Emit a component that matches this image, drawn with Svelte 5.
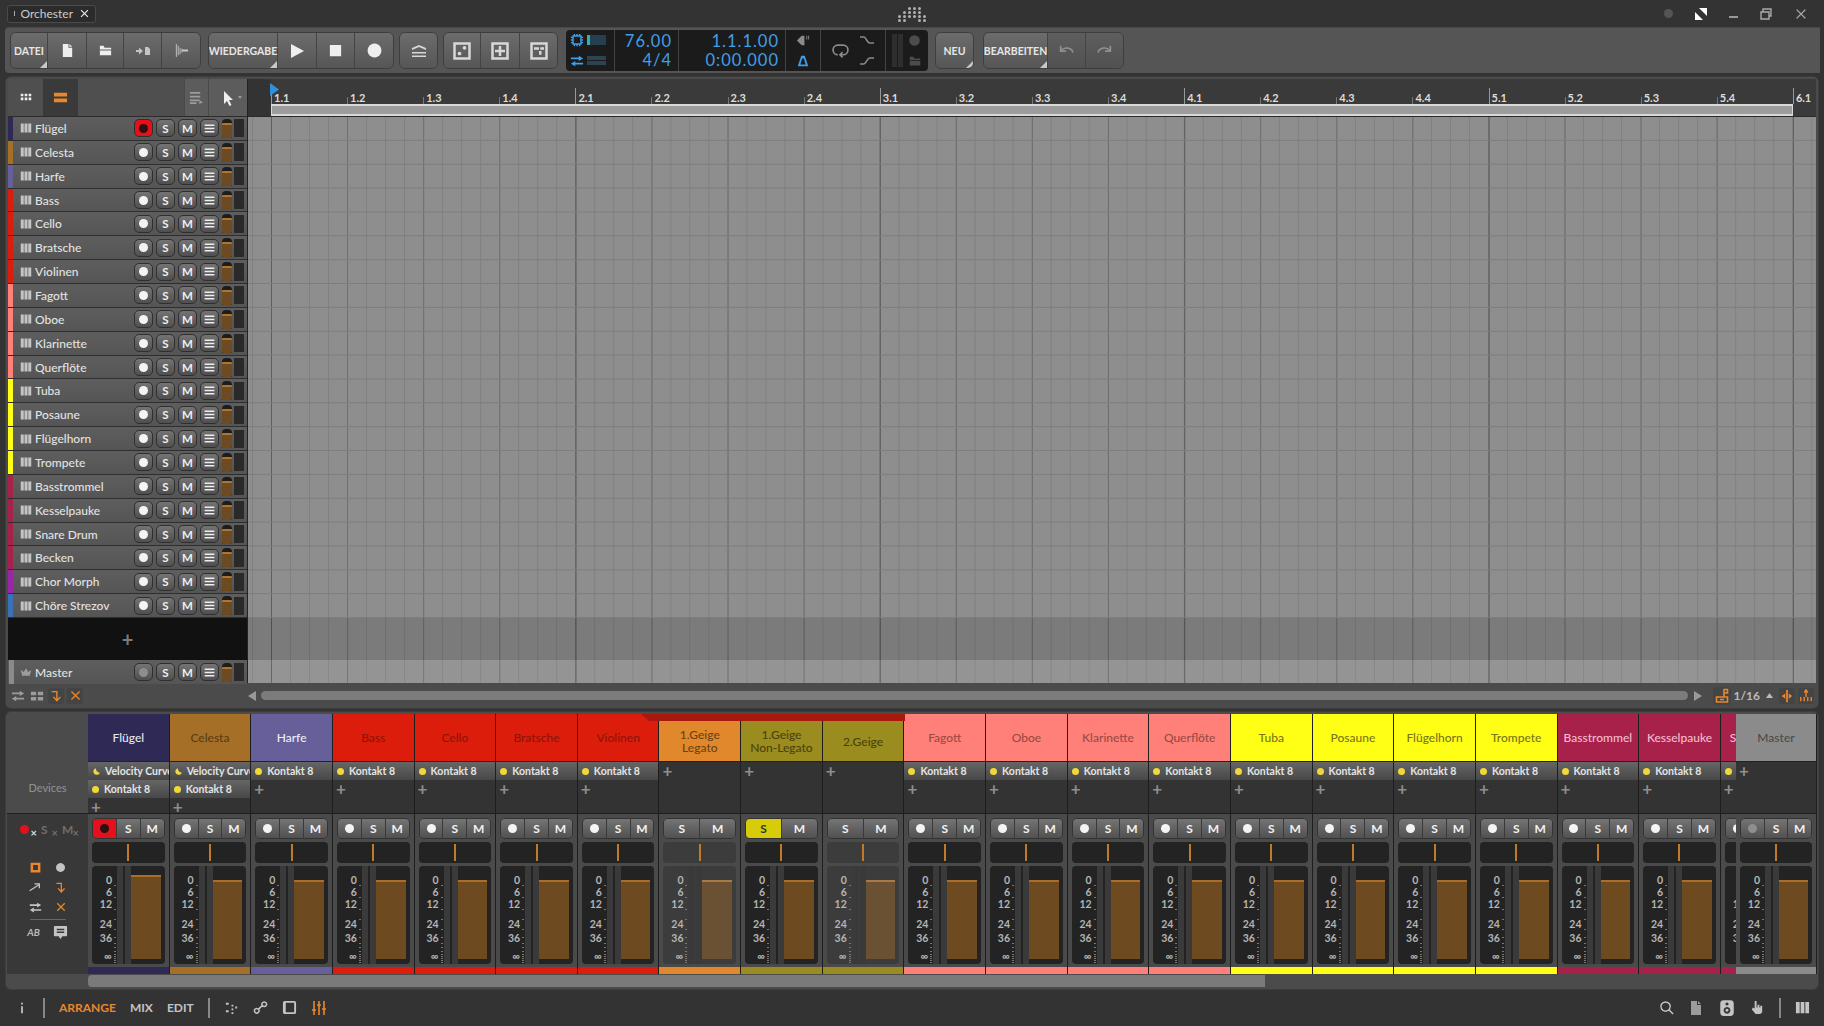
<script lang="ts">
	const RED = '#dd1d0b', PINK = '#ff8078', YEL = '#ffff15', CRIM = '#a8214b';

	const tracks = [
		['Flügel', '#2e2a55'], ['Celesta', '#a56f27'], ['Harfe', '#665f9a'], ['Bass', RED], ['Cello', RED],
		['Bratsche', RED], ['Violinen', RED], ['Fagott', PINK], ['Oboe', PINK], ['Klarinette', PINK],
		['Querflöte', PINK], ['Tuba', YEL], ['Posaune', YEL], ['Flügelhorn', YEL], ['Trompete', YEL],
		['Basstrommel', CRIM], ['Kesselpauke', CRIM], ['Snare Drum', CRIM], ['Becken', CRIM],
		['Chor Morph', '#9b26a5'], ['Chöre Strezov', '#3a72b8']
	];

	type Strip = { name: string; lines?: string[]; color: string; ink: string; dev: number; curve?: boolean; rec?: boolean; group?: boolean; dim?: boolean; solo?: boolean; top?: boolean };
	const rd = '#8d1409', pk = '#9a4a44', yl = '#77771a', cr = '#f4bccd';
	const strips: Strip[] = [
		{ name: 'Flügel', color: '#2e2a55', ink: '#e6e6f0', dev: 2, curve: true, rec: true, top: true },
		{ name: 'Celesta', color: '#a56f27', ink: '#5c3d14', dev: 2, curve: true },
		{ name: 'Harfe', color: '#665f9a', ink: '#eeeef6', dev: 1 },
		{ name: 'Bass', color: RED, ink: rd, dev: 1 },
		{ name: 'Cello', color: RED, ink: rd, dev: 1 },
		{ name: 'Bratsche', color: RED, ink: rd, dev: 1 },
		{ name: 'Violinen', color: RED, ink: rd, dev: 1 },
		{ name: '1.Geige', lines: ['1.Geige', 'Legato'], color: '#e0882b', ink: '#6e4314', dev: 0, group: true, dim: true },
		{ name: '1.Geige', lines: ['1.Geige', 'Non-Legato'], color: '#9a8c1e', ink: '#4a430d', dev: 0, group: true, solo: true },
		{ name: '2.Geige', color: '#9a8c1e', ink: '#4a430d', dev: 0, group: true, dim: true },
		{ name: 'Fagott', color: PINK, ink: pk, dev: 1 },
		{ name: 'Oboe', color: PINK, ink: pk, dev: 1 },
		{ name: 'Klarinette', color: PINK, ink: pk, dev: 1 },
		{ name: 'Querflöte', color: PINK, ink: pk, dev: 1 },
		{ name: 'Tuba', color: YEL, ink: yl, dev: 1 },
		{ name: 'Posaune', color: YEL, ink: yl, dev: 1 },
		{ name: 'Flügelhorn', color: YEL, ink: yl, dev: 1 },
		{ name: 'Trompete', color: YEL, ink: yl, dev: 1 },
		{ name: 'Basstrommel', color: CRIM, ink: cr, dev: 1 },
		{ name: 'Kesselpauke', color: CRIM, ink: cr, dev: 1 },
		{ name: 'Snare Drum', color: CRIM, ink: cr, dev: 1 }
	];
	const master: Strip = { name: 'Master', color: '#8b8b8b', ink: '#4c4c4c', dev: 0 };

	const beats: { label: string; bar: boolean }[] = [];
	for (let b = 1; b <= 5; b++) for (let q = 1; q <= 4; q++) beats.push({ label: `${b}.${q}`, bar: q === 1 });
	beats.push({ label: '6.1', bar: true });

	// dB scale, top offsets inside the fader box
	const scale = [['0', 14], ['6', 26], ['12', 38], ['24', 58], ['36', 72], ['∞', 90]];
	const ticks = [14, 26, 38, 48, 58, 66, 72, 76, 80, 83, 85, 87, 89, 91];

	const paths: Record<string, string> = {
		file: 'M3 1h6v4h4v10H3zM10 1l3 3h-3z',
		folder: 'M2 3h4l1 2h7v2H2zM2 8h12v5H2z',
		load: 'M1 7h3V4.5L8 8l-4 3.5V9H1zM10 4h3l2 2v6h-5z',
		wave: 'M2 1h1v14H2zM4 3h1v10H4zM6 5h1v7H6zM8 6h1v4H8zM9 7h6v2H9z',
		play: 'M2 1l13 7-13 7z',
		stop: 'M2 2h12v12H2z',
		dot: 'M8 1.5a6.5 6.5 0 1 0 .01 0z',
		layers: 'M8 2l7 3v2L8 4 1 7V5zM1 9h14v1.5H1zM1 12.5h14V14H1z',
		grid: 'M2 3h3v3H2zM6.5 3h3v3h-3zM11 3h3v3h-3zM2 7.5h3v3H2zM6.5 7.5h3v3h-3zM11 7.5h3v3h-3z',
		rows: 'M1 3h14v4H1zM1 9h14v4H1z',
		menu: 'M2 3h12v2H2zM2 7h12v2H2zM2 11h12v2H2z',
		lanes: 'M1 2h11v2H1zM1 6h11v2H1zM1 10h11v2H1zM1 13h7v2H1zM11 11l4 2-4 2z',
		piano: 'M1 2h4v12H1zM6 2h4v12H6zM11 2h4v12h-4z',
		crown: 'M1 5l4 3 3-5 3 5 4-3-2 8H3z',
		cursor: 'M4 1l9 9H9l2.5 5-2 1L7 11l-3 3z',
		swap: 'M1 4h9V2l5 3-5 3V6H1zM15 10H6V8l-5 3 5 3v-2h9z',
		split: 'M1 3h6v4H1zM9 3h6v4H9zM1 9h6v4H1zM9 9h6v4H9z',
		chat: 'M2 1h12a1 1 0 0 1 1 1v9a1 1 0 0 1-1 1H10l-2 3-2-3H2a1 1 0 0 1-1-1V2a1 1 0 0 1 1-1zM4 4v1.5h8V4zM4 7v1.5h8V7z',
		hand: 'M5 1h2v7h1V5h2v3h1V6h2v7l-2 2H6L2 10l1-2 2 1z',
		speaker: 'M5 1h6a3 3 0 0 1 3 3v8a3 3 0 0 1-3 3H5a3 3 0 0 1-3-3V4a3 3 0 0 1 3-3zM8 3a1.4 1.4 0 1 0 .01 0zM8 7a3 3 0 1 0 .01 0zM8 8.6a1.4 1.4 0 1 1-.01 0z',
		panel: 'M3 1h10a2 2 0 0 1 2 2v10a2 2 0 0 1-2 2H3a2 2 0 0 1-2-2V3a2 2 0 0 1 2-2zM4 3v10h9V3z',
		info: 'M7 2h2v2H7zM7 6h2v8H7z',
		scatter: 'M2 3h3v2H2zM8 5h2v2H8zM12 7h2v2h-2zM8 9h2v2H8zM2 11h3v2H2zM8 13h2v2H8z',
		moon: 'M7 2a6 6 0 1 0 7 8A7 7 0 0 1 7 2z',
		pin: 'M7 1h2v14H7zM2 8l4-3v6zM14 8l-4-3v6z',
		metro: 'M6 2h4l4 12H2zM7 5l-2 7h6L9 5z',
		mark: 'M1 8l5-5h3v10H6zM11 3h1v4h-1zM13 3h1v4h-1z',
		curveA: '',
		square: 'M2 2h12v12H2zM5 5v6h6V5z',
		plusbox: 'M1 1h14v14H1zM3 3v10h10V3zM7 4h2v3h3v2H9v3H7V9H4V7h3z',
		patch: 'M1 1h14v14H1zM3 3v10h10V3zM4 5h4v2H4zM9 5h3v2H9zM8 8h2v3H8z',
		nodes: 'M1 1h14v14H1zM3 3v10h10V3zM10 4a1.5 1.5 0 1 0 .01 0zM6 8.5a1.5 1.5 0 1 0 .01 0z'
	};
	const strokes: Record<string, string> = {
		undo: 'M3 8a6 5 0 0 1 11 2M2.5 3.5V8.5H7.5',
		redo: 'M13 8a6 5 0 0 0-11 2M13.5 3.5V8.5H8.5',
		loop: 'M5.5 3h5a4 4 0 0 1 0 9H8M10 9.5L7.5 12 10 14.5M5.5 12a4.5 4.5 0 0 1 0-9',
		cross: 'M3 3l10 10M13 3L3 13',
		down: 'M3 3h6v9M5 9l4 4.5L13 9',
		upright: 'M2 12l11-7M8 3.5h6V9',
		search: 'M7 2a5 5 0 1 0 .01 0zM10.5 10.5l4.5 4.5',
		link: 'M4 9a2.5 2.5 0 1 0 .01 0zM12 2a2.5 2.5 0 1 0 .01 0zM5.6 10l4.8-4.5',
		faders: 'M3 1v14M8 1v14M13 1v14M1 10h4M6 5h4M11 9h4',
		net: 'M10 1.5h3.5v3.5H10zM2.5 9h11v5h-11zM10 5v4M6 11.5h4',
		tilt: 'M8 1v8M2 14V9M6 14V9M10 14V9M14 14V9M6 4l2-3 2 3',
		cpu: 'M3.5 3.5h9v9h-9zM5 1v2M8 1v2M11 1v2M5 13v2M8 13v2M11 13v2M1 5h2M1 8h2M1 11h2M13 5h2M13 8h2M13 11h2',
		wave1: 'M1 5h4c2 0 3 6 6 6h4',
		wave2: 'M1 11h4c2 0 3-6 6-6h4'
	};
</script>

{#snippet ic(name: string, size = 14, cls = '')}
	<svg class="ic {cls}" width={size} height={size} viewBox="0 0 16 16" aria-hidden="true">
		{#if strokes[name]}
			<path d={strokes[name]} fill="none" stroke="currentColor" stroke-width="1.6" />
		{:else}
			<path d={paths[name]} fill="currentColor" fill-rule="evenodd" />
		{/if}
	</svg>
{/snippet}

{#snippet stripColumn(s: Strip, w: string)}
	<div class="strip {w}">
		<div class="head" class:grouped={s.group} style="background:{s.color};color:{s.ink}">
			{#if s.lines}
				{#each s.lines as l}<span>{l}</span>{/each}
			{:else}
				<span>{s.name}</span>
			{/if}
		</div>
		<div class="devs">
			{#if s.curve}
				<div class="dev">{@render ic('moon', 9, 'yel')}<span>Velocity Curve</span></div>
			{/if}
			{#if s.dev > 0}
				<div class="dev"><i class="ydot"></i><span>Kontakt 8</span></div>
			{/if}
			<div class="add">+</div>
		</div>
		<div class="ctl">
			<div class="seg">
				{#if !s.group}
					<button class="sg" class:on={s.rec}><i class="rdot" class:dark={s.rec} class:grey={s === master}></i></button>
				{/if}
				<button class="sg" class:soloed={s.solo}>S</button>
				<button class="sg">M</button>
			</div>
			<div class="pan" class:muted={s.dim}><i></i></div>
			<div class="fader" class:muted={s.dim}>
				<div class="scale">
					{#each scale as [t, y]}<span style="top:{y}px">{t}</span>{/each}
					{#each ticks as y}<b style="top:{y + 5}px"></b>{/each}
				</div>
				<div class="meter"><i></i><i></i></div>
				<div class="fillcol">
					<div class="fill" style="height:{s.top ? 84 : 79}px"></div>
				</div>
			</div>
		</div>
		<div class="foot" style="background:{s.color}"></div>
	</div>
{/snippet}

<div class="app">
	<header class="title">
		<div class="tab"><i class="tabdot"></i><span>Orchester</span>{@render ic('cross', 11)}</div>
		<div class="logo" aria-hidden="true">
			{#each [[0,0,1,1,1,0],[0,1,1,1,1,0],[1,1,1,1,1,1],[1,1,0,0,1,1]] as row}
				<div class="logorow">{#each row as c}<i class:off={!c}></i>{/each}</div>
			{/each}
		</div>
		<div class="win">
			<i class="windot"></i>
			<svg width="14" height="14" viewBox="0 0 14 14" aria-hidden="true"><path d="M5 1h8v8zM1 5l8 8H1z" fill="#fff" /></svg>
			<span class="wmin"></span>
			<svg width="14" height="14" viewBox="0 0 14 14" aria-hidden="true"><path d="M2 5h8v7H2zM4 5V2h8v7h-2" fill="none" stroke="#aaa" stroke-width="1.4" /></svg>
			{@render ic('cross', 14, 'wclose')}
		</div>
	</header>

	<section class="toolbar">
		<div class="grp g1">
			<button class="tb tx corner" style="width:37px">DATEI</button>
			<button class="tb" style="width:39px">{@render ic('file', 15)}</button>
			<button class="tb" style="width:37px">{@render ic('folder', 15)}</button>
			<button class="tb" style="width:38px">{@render ic('load', 16, 'soft')}</button>
			<button class="tb" style="width:38px">{@render ic('wave', 15, 'soft')}</button>
		</div>
		<div class="grp g2">
			<button class="tb tx corner" style="width:69px">WIEDERGABE</button>
			<button class="tb" style="width:39px">{@render ic('play', 16)}</button>
			<button class="tb" style="width:38px">{@render ic('stop', 15)}</button>
			<button class="tb" style="width:38px">{@render ic('dot', 17)}</button>
		</div>
		<div class="grp g3"><button class="tb" style="width:37px">{@render ic('layers', 16, 'soft')}</button></div>
		<div class="grp g3">
			<button class="tb" style="width:37px">{@render ic('nodes', 20)}</button>
			<button class="tb" style="width:39px">{@render ic('plusbox', 20)}</button>
			<button class="tb" style="width:37px">{@render ic('patch', 20)}</button>
		</div>
		<div class="display">
			<div class="dsec perf">
				<div class="drow">{@render ic('cpu', 14)}<span class="dbar"><i></i></span></div>
				<div class="drow">{@render ic('swap', 14)}<span class="dbar two"></span></div>
			</div>
			<div class="dsec num tempo"><span>76.00</span><span>4/4</span></div>
			<div class="dsec num pos"><span>1.1.1.00</span><span>0:00.000</span></div>
			<div class="dsec ico">{@render ic('mark', 15, 'grey')}{@render ic('metro', 14)}</div>
			<div class="dsec lp">
				{@render ic('loop', 17, 'grey')}
				<div class="lpw">{@render ic('wave1', 16, 'grey')}{@render ic('wave2', 16, 'grey')}</div>
			</div>
			<div class="dsec arm">
				<span class="armbars"><i></i><i></i></span>
				<div class="lpw">{@render ic('dot', 13, 'dgrey')}{@render ic('folder', 14, 'dgrey')}</div>
			</div>
		</div>
		<div class="grp g4"><button class="tb tx corner" style="width:37px">NEU</button></div>
		<div class="grp g5">
			<button class="tb tx corner" style="width:64px">BEARBEITEN</button>
			<button class="tb dis" style="width:38px">{@render ic('undo', 17)}</button>
			<button class="tb dis" style="width:37px">{@render ic('redo', 17)}</button>
		</div>
	</section>

	<section class="arrange">
		<div class="arr-main">
			<div class="tracks">
				<div class="lhead">
					<button class="lh" style="width:35px">{@render ic('grid', 14)}</button>
					<button class="lh active" style="width:35px">{@render ic('rows', 15, 'or')}</button>
					<span class="lspace"></span>
					<button class="lh shade" style="width:24px">{@render ic('lanes', 15, 'mid')}</button>
					<button class="lh shade cur" style="width:39px">{@render ic('cursor', 16)}<em></em></button>
				</div>
				{#each tracks as [name, color], i}
					<div class="track">
						<i class="stripe" style="background:{color}"></i>
						{@render ic('piano', 12, 'soft')}
						<span class="tname">{name}</span>
						<button class="tbtn" class:on={i === 0}><i class="rdot" class:dark={i === 0}></i></button>
						<button class="tbtn">S</button>
						<button class="tbtn">M</button>
						<button class="tbtn">{@render ic('menu', 13)}</button>
						<span class="vol"><i></i></span>
						<span class="lvl"></span>
					</div>
				{/each}
				<div class="addzone">+</div>
				<div class="track mast">
					<i class="stripe" style="background:#8b8b8b"></i>
					{@render ic('crown', 12, 'mid')}
					<span class="tname">Master</span>
					<button class="tbtn"><i class="rdot grey"></i></button>
					<button class="tbtn">S</button>
					<button class="tbtn">M</button>
					<button class="tbtn">{@render ic('menu', 13)}</button>
					<span class="vol"><i></i></span>
					<span class="lvl"></span>
				</div>
			</div>
			<div class="timeline">
				<div class="ruler">
					<div class="pre"><svg class="playhead" width="9" height="13" viewBox="0 0 9 13" aria-hidden="true"><path d="M0 0l9 6.5L0 13z" fill="#2f8fd8" /></svg></div>
					{#each beats as b}
						<div class="beat" class:bar={b.bar}><span>{b.label}</span></div>
					{/each}
					<div class="loopbar"></div>
				</div>
				<div class="gridarea">
					<div class="lanes"></div>
					<div class="empty"></div>
					<div class="mlane"></div>
				</div>
			</div>
		</div>
		<div class="arr-foot">
			<div class="ftools">
				<span class="fb">{@render ic('swap', 14, 'mid')}</span>
				<span class="fb">{@render ic('split', 14, 'mid')}</span>
				<span class="fb box">{@render ic('down', 14, 'or')}</span>
				<span class="fb box">{@render ic('cross', 13, 'or')}</span>
			</div>
			<svg class="arrow" width="8" height="10" viewBox="0 0 8 10" aria-hidden="true"><path d="M8 0v10L0 5z" fill="#999" /></svg>
			<div class="thumb"></div>
			<svg class="arrow" width="8" height="10" viewBox="0 0 8 10" aria-hidden="true"><path d="M0 0v10l8-5z" fill="#999" /></svg>
			<span class="fb box wide">{@render ic('net', 16, 'or')}</span>
			<span class="quant">1/16</span>
			<svg width="7" height="5" viewBox="0 0 7 5" aria-hidden="true"><path d="M3.5 0L7 5H0z" fill="#bbb" /></svg>
			<span class="fb box">{@render ic('pin', 14, 'or')}</span>
			<span class="fb box">{@render ic('tilt', 14, 'or')}</span>
		</div>
	</section>

	<section class="mixer">
		<div class="mix-body">
			<div class="mleft">
				<div class="mlabel">Devices</div>
				<div class="mtools">
					<div class="mrow top">
						<span class="tog"><i class="reddot"></i><small>×</small></span>
						<span class="tog dimtx">S<small>×</small></span>
						<span class="tog dimtx">M<small>×</small></span>
					</div>
					<div class="mrow first">{@render ic('square', 13, 'or')}{@render ic('dot', 11, 'soft')}</div>
					<div class="mrow">{@render ic('upright', 13, 'soft')}{@render ic('down', 13, 'or')}</div>
					<div class="mrow">{@render ic('swap', 13, 'soft')}{@render ic('cross', 12, 'or')}</div>
					<div class="mrule"></div>
					<div class="mrow"><em class="ab">AB</em>{@render ic('chat', 15, 'soft')}</div>
				</div>
			</div>
			<div class="strips">
				{#each strips as s}
					{@render stripColumn(s, 'w')}
				{/each}
				<div class="groupbar"></div>
			</div>
			{@render stripColumn(master, 'master')}
		</div>
		<div class="mscroll"><div class="mthumb"></div></div>
	</section>

	<footer class="status">
		<div class="sleft">
			{@render ic('info', 14, 'soft')}
			<i class="ssep"></i>
			<span class="nav act">ARRANGE</span>
			<span class="nav">MIX</span>
			<span class="nav">EDIT</span>
			<i class="ssep"></i>
			{@render ic('scatter', 15, 'soft')}
			{@render ic('link', 15, 'soft')}
			{@render ic('panel', 15, 'soft')}
			{@render ic('faders', 16, 'or')}
		</div>
		<div class="sright">
			{@render ic('search', 15, 'soft')}
			{@render ic('file', 16, 'mid')}
			{@render ic('speaker', 18, 'soft')}
			{@render ic('hand', 15, 'soft')}
			<i class="ssep"></i>
			{@render ic('piano', 15, 'soft')}
		</div>
	</footer>
</div>

<style>
	:global(body) {
		margin: 0;
		background: #333;
	}
	.app {
		width: 1824px;
		height: 1026px;
		overflow: hidden;
		display: flex;
		flex-direction: column;
		background: #333;
		color: #ddd;
		font-family: Lato, 'Open Sans', sans-serif;
	}
	button {
		font: inherit;
		color: inherit;
		padding: 0;
		margin: 0;
		border: 0;
	}
	.ic { display: block; flex: none; color: #eee; }
	.ic.soft { color: #c4c4c4; }
	.ic.mid { color: #9c9c9c; }
	.ic.or { color: #e8872e; }
	.ic.yel { color: #f0d83a; }
	.ic.grey { color: #8a8a8a; }
	.ic.dgrey { color: #4c4c4c; }

	/* title */
	.title {
		height: 27px;
		flex: none;
		display: flex;
		align-items: center;
		position: relative;
		padding: 0 16px 0 7px;
		justify-content: space-between;
	}
	.tab {
		width: 89px;
		height: 18px;
		box-sizing: border-box;
		border: 1px solid #4a4a4a;
		border-radius: 3px;
		background: #2b2b2b;
		display: flex;
		align-items: center;
		gap: 6px;
		padding: 0 5px;
		font-size: 12px;
		color: #ccc;
	}
	.tabdot { width: 5px; height: 5px; background: #aaa; margin-left: 1px; }
	.logo {
		position: absolute;
		left: 898px;
		top: 7px;
		display: flex;
		flex-direction: column;
		gap: 1px;
	}
	.logorow { display: flex; gap: 1px; }
	.logorow i { width: 3px; height: 3px; border-radius: 50%; background: #b0b0b0; margin-right: 1px; }
	.logorow i.off { background: transparent; }
	.win { display: flex; align-items: center; gap: 21px; color: #aaa; }
	.windot { width: 9px; height: 9px; border-radius: 50%; background: #555; }
	.wmin { width: 9px; height: 2px; background: #999; margin-top: 6px; }
	.win :global(.wclose) { color: #aaa; }

	/* toolbar */
	.toolbar {
		height: 45px;
		flex: none;
		margin: 1px 0 4px 5px;
		padding: 4px 0 0 5px;
		box-sizing: border-box;
		background: #555;
		border-radius: 4px 0 0 4px;
		display: flex;
		align-items: flex-start;
		box-shadow: 0 -1px 0 #484848;
	}
	.toolbar { width: 1815px; }
	.grp {
		display: flex;
		height: 37px;
		box-sizing: border-box;
		border: 1px solid #3e3e3e;
		border-radius: 6px;
		overflow: hidden;
		flex: none;
	}
	.g1 { margin-right: 7px; }
	.g2 { margin-right: 5px; }
	.g3 { margin-right: 5px; }
	.g4 { margin-right: 9px; }
	.tb {
		height: 100%;
		display: flex;
		align-items: center;
		justify-content: center;
		background: linear-gradient(#6c6c6c, #565656);
		border-right: 1px solid #444;
		position: relative;
		box-sizing: border-box;
	}
	.tb:last-child { border-right: 0; }
	.tb.tx { font-size: 10.5px; font-weight: 700; color: #e6e6e6; white-space: nowrap; }
	.tb.corner::after {
		content: '';
		position: absolute;
		right: 0;
		bottom: 0;
		width: 0;
		height: 0;
		border-left: 7px solid transparent;
		border-bottom: 7px solid #c8c8c8;
	}
	.tb.dis { background: linear-gradient(#5e5e5e, #515151); }
	.tb.dis :global(.ic) { color: #8f8f8f; }
	.g3 .tb :global(.ic) { color: #d8d8d8; }

	.display {
		flex: none;
		width: 362px;
		height: 41px;
		margin: -2px 7px 0 3px;
		background: #1b1b1b;
		border-radius: 4px;
		display: flex;
		color: #3f9fe8;
	}
	.display :global(.ic:not(.grey):not(.dgrey)) { color: #3f9fe8; }
	.dsec {
		box-sizing: border-box;
		border-right: 1px solid #444;
		height: 100%;
		display: flex;
		flex-direction: column;
		justify-content: space-around;
		flex: none;
	}
	.dsec:last-child { border-right: 0; }
	.perf { width: 49px; padding-left: 4px; }
	.drow { display: flex; align-items: center; gap: 3px; }
	.dbar { width: 19px; height: 10px; background: #24404f; display: block; }
	.dbar i { display: block; width: 3px; height: 100%; background: #2fb3a8; }
	.dbar.two { height: 9px; background: linear-gradient(#2c4452 40%, #1b1b1b 40%, #1b1b1b 60%, #2c4452 60%); }
	.num { font-size: 16.5px; letter-spacing: 1px; text-align: right; align-items: flex-end; padding-right: 6px; line-height: 19px; justify-content: center; }
	.tempo { width: 64px; }
	.pos { width: 107px; }
	.ico { width: 35px; align-items: center; }
	.lp { width: 65px; flex-direction: row; align-items: center; justify-content: center; gap: 10px; }
	.lpw { display: flex; flex-direction: column; justify-content: space-around; height: 100%; }
	.arm { width: 42px; flex-direction: row; align-items: center; justify-content: center; gap: 5px; }
	.armbars { display: flex; gap: 1px; height: 33px; }
	.armbars i { width: 5px; background: #2e2e2e; }

	/* arrange */
	.arrange {
		height: 631px;
		flex: none;
		margin: 0 6px 4px 6px;
		box-sizing: border-box;
		padding: 2px 2px 0 2px;
		background: #4b4b4b;
		border-radius: 5px;
		box-shadow: 0 0 0 1px #3d3d3d;
		display: flex;
		flex-direction: column;
	}
	.arr-main { height: 604px; display: flex; flex: none; background: #222; }
	.tracks { width: 239px; flex: none; background: #111; display: flex; flex-direction: column; margin-right: 1px; }
	.lhead {
		height: 37px;
		flex: none;
		display: flex;
		background: #4f4f4f;
		border-bottom: 1px solid #2c2c2c;
		box-sizing: content-box;
	}
	.lh { display: flex; align-items: center; justify-content: center; background: #4f4f4f; position: relative; }
	.lh.active { background: #3a3a3a; }
	.lh.shade { background: #5c5c5c; border-left: 1px solid #4a4a4a; box-sizing: border-box; }
	.lh.cur em {
		position: absolute; right: 5px; top: 17px;
		border-left: 2.5px solid transparent; border-right: 2.5px solid transparent; border-top: 3px solid #999;
	}
	.lspace { flex: 1; }
	.track {
		height: 23.87px;
		flex: none;
		box-sizing: border-box;
		display: flex;
		align-items: center;
		background: linear-gradient(#5e5e5e, #555);
		border-bottom: 1px solid #2e2e2e;
		padding-right: 3px;
	}
	.stripe { width: 5px; height: 100%; flex: none; margin-right: 7px; }
	.tname { flex: 1; margin-left: 3px; font-size: 12px; font-weight: 500; color: #e2e2e2; white-space: nowrap; }
	.tbtn {
		width: 19px;
		height: 18px;
		box-sizing: border-box;
		margin-right: 3px;
		flex: none;
		display: flex;
		align-items: center;
		justify-content: center;
		border: 1px solid #2f2f2f;
		border-radius: 5px;
		background: linear-gradient(#747474, #4f4f4f);
		font-size: 11.5px;
		font-weight: 700;
		color: #f0f0f0;
	}
	.tbtn.on { background: #e4101c; }
	.rdot { display: block; width: 9px; height: 9px; border-radius: 50%; background: #f4f4f4; }
	.rdot.dark { background: #2a1010; }
	.rdot.grey { background: #8e8e8e; }
	.vol {
		width: 10px;
		height: 19px;
		flex: none;
		background: #1d1d1d;
		border-radius: 4px 4px 1px 1px;
		display: flex;
		align-items: flex-end;
		margin-right: 2px;
		overflow: hidden;
	}
	.vol i { display: block; width: 100%; height: 15px; background: linear-gradient(#b0742e 2px, #6e4a20 2px); border-radius: 1px; }
	.lvl { width: 10px; height: 18px; flex: none; background: #2a2a2a; }
	.addzone { height: 42px; flex: none; background: #111; color: #7a7a7a; display: flex; align-items: center; justify-content: center; font-size: 20px; font-weight: 700; margin-top: 0; }
	.track.mast { border-bottom: 0; height: 24px; }
	.track.mast .stripe { margin-left: 1px; margin-right: 6px; }

	.timeline { flex: 1; min-width: 0; display: flex; flex-direction: column; background: #3a3a3a; }
	.ruler {
		height: 37px;
		flex: none;
		display: flex;
		position: relative;
		background: #3a3a3a;
		border-bottom: 1px solid #2a2a2a;
		overflow: hidden;
	}
	.pre { width: 23px; flex: none; background: #333; position: relative; }
	.playhead { position: absolute; left: 22px; top: 4px; z-index: 2; }
	.beat {
		width: 76.1px;
		flex: none;
		box-sizing: border-box;
		font-size: 11px;
		font-weight: 700;
		color: #dcdcdc;
		padding: 12px 0 0 3px;
		position: relative;
	}
	.beat::before { content: ''; position: absolute; left: 0; top: 18px; height: 7px; width: 1px; background: #777; }
	.beat.bar::before { top: 9px; height: 16px; background: #999; }
	.loopbar {
		position: absolute;
		left: 23px;
		width: 1522px;
		top: 25px;
		height: 12px;
		box-sizing: border-box;
		background: #9c9c9c;
		border: 1px solid #d8d8d8;
		border-width: 2px 1px;
	}
	.gridarea {
		flex: 1;
		display: flex;
		flex-direction: column;
		background-color: #8e8e8e;
		background-image:
			linear-gradient(to right, #5e5e5e 1px, transparent 1px),
			linear-gradient(to right, #6e6e6e 1px, transparent 1px),
			linear-gradient(to right, #808080 1px, transparent 1px);
		background-size: 304.4px 100%, 76.1px 100%, 19.025px 100%;
		background-position: 23px 0, 23px 0, 4px 0;
	}
	.lanes {
		height: 501.3px;
		flex: none;
		background-image: linear-gradient(to bottom, transparent 22.87px, #7d7d7d 22.87px);
		background-size: 100% 23.87px;
	}
	.empty { height: 42px; flex: none; background: rgba(0, 0, 0, 0.13); }
	.mlane { flex: 1; background: rgba(255, 255, 255, 0.06); }

	.arr-foot { flex: 1; display: flex; align-items: center; padding-right: 2px; }
	.ftools { width: 240px; display: flex; align-items: center; gap: 3px; padding-left: 2px; flex: none; box-sizing: border-box; }
	.fb { width: 16px; height: 16px; display: flex; align-items: center; justify-content: center; flex: none; }
	.fb.box { background: #444; border-radius: 3px; }
	.fb.wide { width: 18px; height: 18px; margin: 0 50px 0 5px; }
	.arrow { flex: none; margin: 0 5px 0 0; }
	.thumb { flex: 1; height: 9px; border-radius: 5px; background: #7c7c7c; margin-right: 6px; }
	.quant { font-size: 12px; font-weight: 700; color: #bbb; margin-right: 6px; }
	.arr-foot svg + .fb.box { margin-left: 6px; margin-right: 3px; }

	/* mixer */
	.mixer {
		height: 277px;
		flex: none;
		margin: 0 6px 0 6px;
		box-sizing: border-box;
		padding: 2px 1px 2px 1px;
		background: #4b4b4b;
		border-radius: 5px;
		box-shadow: 0 0 0 1px #3d3d3d;
		display: flex;
		flex-direction: column;
	}
	.mix-body { height: 260px; flex: none; display: flex; }
	.mleft { width: 81px; flex: none; display: flex; flex-direction: column; }
	.mlabel { height: 100px; flex: none; box-sizing: border-box; background: #4b4b4b; border-bottom: 1px solid #222; color: #8f8f8f; font-size: 11px; font-weight: 500; display: flex; align-items: flex-end; justify-content: center; padding-bottom: 19px; }
	.mtools { flex: 1; background: #383838; display: flex; flex-direction: column; align-items: center; }
	.mrow { display: flex; align-items: center; justify-content: center; gap: 13px; height: 20px; }
	.mrow.top { gap: 8px; margin-top: 5px; height: 20px; font-size: 12px; }
	.mrow.first { margin-top: 18px; height: 20px; }
	.mrule { width: 36px; height: 1px; background: #666; margin: 2px 0 2px; }
	.tog { position: relative; display: flex; align-items: center; width: 13px; height: 14px; }
	.tog small { position: absolute; right: -4px; bottom: -2px; font-size: 11px; font-weight: 700; color: #ddd; line-height: 1; }
	.dimtx { color: #6f6f6f; font-weight: 700; }
	.dimtx small { color: #6f6f6f; }
	.reddot { width: 9px; height: 9px; border-radius: 50%; background: #e4101c; display: block; }
	.ab { font-size: 10px; font-weight: 700; color: #bbb; font-style: italic; }

	.strips { flex: 1; min-width: 0; display: flex; overflow: hidden; position: relative; background: #222; }
	.strip { flex: none; box-sizing: border-box; border-right: 1px solid #1e1e1e; display: flex; flex-direction: column; background: #4a4a4a; }
	.strip.w { width: 81.65px; }
	.strip.master { width: 81px; }
	.head {
		height: 47px;
		flex: none;
		display: flex;
		flex-direction: column;
		align-items: center;
		justify-content: center;
		font-size: 12px;
		font-weight: 500;
		line-height: 13px;
		white-space: nowrap;
	}
	.head.grouped { padding-top: 7px; box-sizing: border-box; }
	.groupbar {
		position: absolute;
		left: 553px;
		top: 0;
		width: 264px;
		height: 7px;
		background: #a8180c;
		clip-path: polygon(0 0, 100% 0, 100% 100%, 8px 100%);
	}
	.devs { height: 53px; flex: none; background: #333; border-top: 1px solid #222; border-bottom: 1px solid #1e1e1e; box-sizing: border-box; overflow: hidden; }
	.dev {
		height: 18px;
		display: flex;
		align-items: center;
		gap: 4px;
		padding-left: 4px;
		background: linear-gradient(#666, #474747);
		font-size: 10.5px;
		font-weight: 700;
		color: #e4e4e4;
		white-space: nowrap;
	}
	.ydot { width: 7px; height: 7px; border-radius: 50%; background: #f0d83a; flex: none; margin-right: 1px; }
	.add { height: 17px; font-size: 17px; line-height: 17px; font-weight: 700; color: #8e8e8e; padding-left: 3px; }
	.ctl { flex: 1; display: flex; flex-direction: column; padding: 4px 4px 3px; box-sizing: border-box; gap: 3px; min-height: 0; }
	.seg { height: 21px; flex: none; display: flex; border: 1px solid #333; border-radius: 5px; overflow: hidden; box-sizing: border-box; }
	.sg {
		flex: 1;
		display: flex;
		align-items: center;
		justify-content: center;
		background: linear-gradient(#747474, #515151);
		border-right: 1px solid #3a3a3a;
		font-size: 12px;
		font-weight: 700;
		color: #f2f2f2;
	}
	.sg:last-child { border-right: 0; }
	.sg.on { background: #e4101c; }
	.sg.soloed { background: #d6cc0a; color: #333; }
	.pan { height: 21px; flex: none; border-radius: 4px; background: #232323; display: flex; align-items: center; justify-content: center; }
	.pan i { display: block; width: 2px; height: 17px; background: #bf7a2a; }
	.fader {
		flex: 1;
		min-height: 0;
		border-radius: 4px;
		background: #232323;
		display: flex;
		margin-top: 0;
		overflow: hidden;
	}
	.muted { background: #3c3c3c; }
	.scale { width: 25px; flex: none; position: relative; }
	.scale span { position: absolute; right: 5px; top: 0; transform: translateY(-50%); font-size: 10.5px; font-weight: 700; color: #b4b4b4; line-height: 1; }
	.scale b { position: absolute; right: 1px; width: 2px; height: 1px; background: #777; }
	.meter { display: flex; gap: 2px; width: 14px; flex: none; padding-right: 0; }
	.meter i { width: 6px; background: #3a3a3a; display: block; }
	.fillcol { flex: 1; display: flex; flex-direction: column; justify-content: flex-end; padding: 0 4px 5px 0; box-sizing: border-box; }
	.fill { background: linear-gradient(#ab6d27 2px, #6e4a20 2px); }
	.muted .fill { background: linear-gradient(#a87a46 2px, #6b5134 2px); }
	.foot { height: 7px; flex: none; }

	.mscroll { flex: 1; display: flex; padding: 1px 0 1px 81px; }
	.mthumb { width: 1177px; height: 12px; border-radius: 4px 0 0 4px; background: #7a7a7a; }

	/* status */
	.status {
		flex: 1;
		display: flex;
		align-items: center;
		justify-content: space-between;
		padding: 0 14px 0 15px;
	}
	.sleft, .sright { display: flex; align-items: center; }
	.sleft { gap: 14px; }
	.sright { gap: 14px; }
	.ssep { width: 2px; height: 20px; background: #888; display: block; }
	.nav { font-size: 12px; font-weight: 700; color: #c4c4c4; }
	.nav.act { color: #e8872e; }
</style>
